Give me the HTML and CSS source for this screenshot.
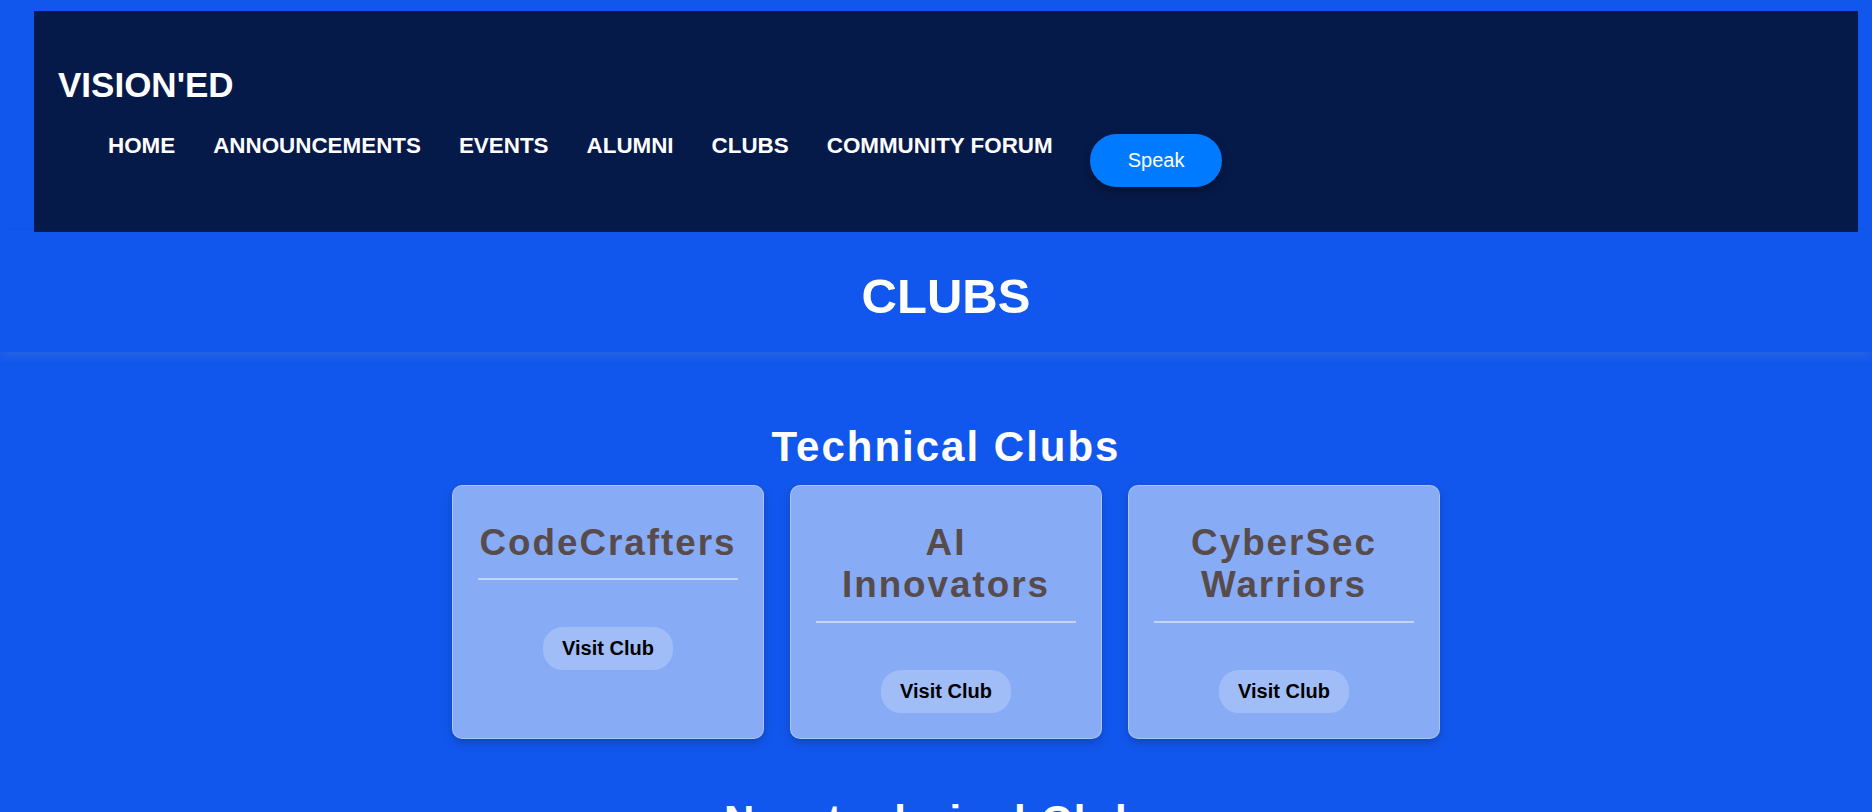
FILE: index.html
```html
<!DOCTYPE html>
<html lang="en">
<head>
<meta charset="utf-8">
<title>Clubs - VISION'ED</title>
<link rel="stylesheet" href="styles.css">
</head>
<body>
<header class="site-header">
  <h1 class="logo">VISION'ED</h1>
  <nav class="nav">
    <ul class="nav-list">
      <li><a href="#">HOME</a></li>
      <li><a href="#">ANNOUNCEMENTS</a></li>
      <li><a href="#">EVENTS</a></li>
      <li><a href="#">ALUMNI</a></li>
      <li><a href="#">CLUBS</a></li>
      <li><a href="#">COMMUNITY FORUM</a></li>
    </ul>
    <button class="speak-btn" type="button">Speak</button>
  </nav>
</header>

<section class="title-band">
  <h1 class="page-title">CLUBS</h1>
</section>

<main class="content">
  <section class="club-section">
    <h2 class="section-title">Technical Clubs</h2>
    <div class="card-row">
      <div class="club-card">
        <h3 class="club-name">CodeCrafters</h3>
        <hr class="club-rule">
        <a class="visit-btn" href="#">Visit Club</a>
      </div>
      <div class="club-card">
        <h3 class="club-name">AI Innovators</h3>
        <hr class="club-rule">
        <a class="visit-btn" href="#">Visit Club</a>
      </div>
      <div class="club-card">
        <h3 class="club-name">CyberSec Warriors</h3>
        <hr class="club-rule">
        <a class="visit-btn" href="#">Visit Club</a>
      </div>
    </div>
  </section>

  <section class="club-section">
    <h2 class="section-title">Non-technical Clubs</h2>
    <div class="card-row">
      <div class="club-card">
        <h3 class="club-name">Drama Club</h3>
        <hr class="club-rule">
        <a class="visit-btn" href="#">Visit Club</a>
      </div>
      <div class="club-card">
        <h3 class="club-name">Music Society</h3>
        <hr class="club-rule">
        <a class="visit-btn" href="#">Visit Club</a>
      </div>
      <div class="club-card">
        <h3 class="club-name">Art Circle</h3>
        <hr class="club-rule">
        <a class="visit-btn" href="#">Visit Club</a>
      </div>
    </div>
  </section>
</main>
</body>
</html>
```

FILE: styles.css
```css
* {
  box-sizing: border-box;
}

body {
  margin: 0;
  background: #1257ED;
  font-family: "Liberation Sans", Arial, sans-serif;
  color: #fff;
}

.site-header {
  margin: 11px 14px 0 34px;
  background: #061A4A;
  padding: 54px 24px 45px;
}

.logo {
  margin: 0 0 28px;
  font-size: 35px;
  font-weight: 700;
  line-height: 40px;
  color: #fff;
}

.nav {
  display: flex;
  align-items: flex-start;
  gap: 37px;
}

.nav-list {
  list-style: none;
  margin: 0;
  padding: 0 0 0 50px;
  display: flex;
  gap: 38px;
}

.nav-list a {
  color: #fff;
  text-decoration: none;
  font-weight: 700;
  font-size: 22.4px;
  line-height: 26px;
}

.speak-btn {
  margin-top: 1px;
  background: #007BFF;
  color: #fff;
  border: none;
  border-radius: 30px;
  padding: 15px 38px;
  font-family: "Liberation Sans", Arial, sans-serif;
  font-size: 20px;
  line-height: 23px;
  box-shadow: 0 4px 8px rgba(0, 0, 0, 0.35);
}

.title-band {
  padding: 36px 14px 28px 34px;
  text-align: center;
  box-shadow: 0 5px 8px rgba(60, 110, 220, 0.45);
}

.page-title {
  margin: 0;
  font-size: 49px;
  line-height: 56px;
  font-weight: 700;
  color: #fff;
}

.content {
  padding: 0 14px 40px 34px;
}

.club-section {
  margin-top: 71px;
}

.club-section + .club-section {
  margin-top: 58px;
}

.section-title {
  margin: 0 0 14px;
  text-align: center;
  font-size: 42px;
  line-height: 48px;
  font-weight: 700;
  letter-spacing: 2px;
  color: #fff;
}

.card-row {
  display: flex;
  justify-content: center;
  gap: 26px;
}

.club-card {
  width: 312px;
  padding: 25px;
  background: #88ABF5;
  border: 1px solid rgba(255, 255, 255, 0.3);
  border-radius: 10px;
  box-shadow: 0 4px 10px rgba(0, 0, 0, 0.2);
  text-align: center;
}

.club-name {
  margin: 11px 0 14px;
  font-size: 36.8px;
  line-height: 42.3px;
  font-weight: 700;
  letter-spacing: 2px;
  color: #574B4B;
}

.club-rule {
  margin: 0;
  border: none;
  height: 2px;
  background: #C4D4F9;
}

.visit-btn {
  display: inline-block;
  margin-top: 47px;
  padding: 10px 19px;
  background: #A0BDF8;
  border-radius: 20px;
  color: #000;
  font-weight: 700;
  font-size: 20px;
  line-height: 23px;
  text-decoration: none;
}
```
